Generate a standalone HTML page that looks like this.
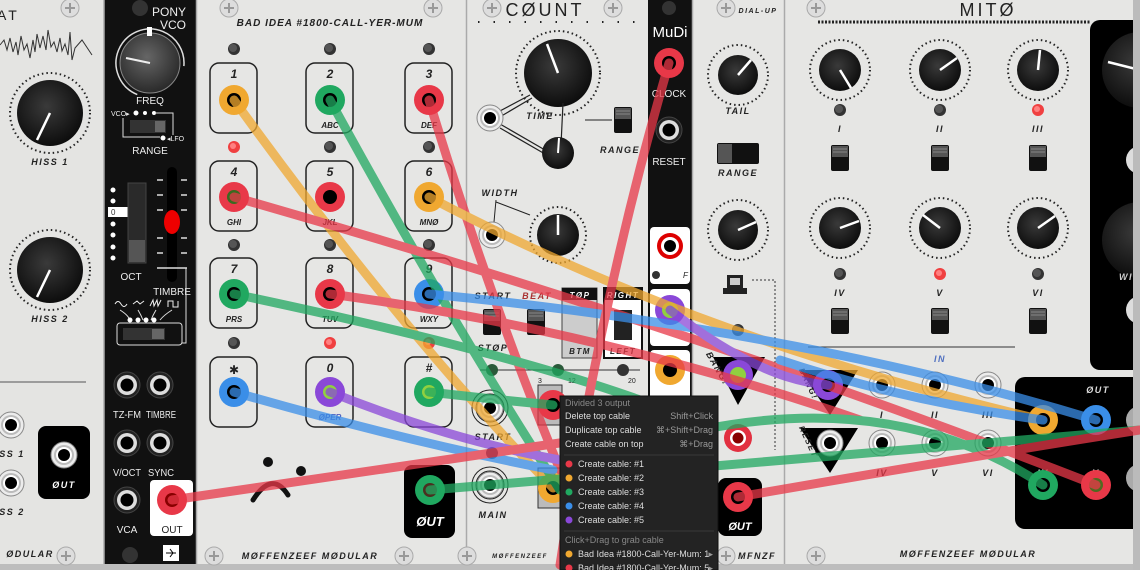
<!DOCTYPE html>
<html><head><meta charset="utf-8">
<style>
html,body{margin:0;padding:0;background:#d8d8d8;}
svg{display:block;}
text{font-family:"Liberation Sans","DejaVu Sans",sans-serif;}
.lbl{font-size:9px;font-weight:bold;font-style:italic;fill:#222;letter-spacing:1.5px;text-anchor:middle;}
.wl{font-size:10px;fill:#eee;text-anchor:middle;font-family:"Liberation Sans Narrow","Liberation Sans",sans-serif;}
.mi{font-size:9px;fill:#ddd;}
.mk{font-size:9px;fill:#999;text-anchor:end;}
.cab{fill:none;stroke-width:9;stroke-linecap:round;opacity:.75;}
</style></head><body>
<svg width="1140" height="570" viewBox="0 0 1140 570" xmlns="http://www.w3.org/2000/svg">
<defs>
<radialGradient id="kg" cx="45%" cy="40%" r="60%"><stop offset="0" stop-color="#3a3a3a"/><stop offset="1" stop-color="#0d0d0d"/></radialGradient>
<radialGradient id="kg2" cx="45%" cy="40%" r="60%"><stop offset="0" stop-color="#666"/><stop offset="1" stop-color="#2a2a2a"/></radialGradient>
<g id="jk"><circle r="13" fill="#ececec" stroke="#888" stroke-width="1"/><circle r="10" fill="#bbb"/><circle r="8" fill="#fff"/><circle r="6" fill="#000"/></g>
<g id="jkd"><circle r="13" fill="#222" stroke="#444"/><circle r="10" fill="#ddd"/><circle r="6.5" fill="#000"/></g>
<g id="sw"><rect x="-9" y="-13" width="18" height="26" rx="2" fill="#111"/><rect x="-8" y="-12" width="16" height="11" fill="#555"/><line x1="-7" y1="-9" x2="7" y2="-9" stroke="#888"/><line x1="-7" y1="-6" x2="7" y2="-6" stroke="#888"/></g>
<g id="led"><circle r="6" fill="#333"/><circle r="4" cx="-1" cy="-1" fill="#555"/></g>
<g id="ledr"><circle r="6" fill="#f04040"/><circle r="3" cx="-1" cy="-1" fill="#ff8080"/></g>
<g id="scr"><circle r="9" fill="#ddd" stroke="#aaa"/><path d="M-5 0H5M0 -5V5" stroke="#999" stroke-width="2"/></g>
</defs>

<rect x="0" y="0" width="104" height="570" fill="#e4e4e2"/>
<rect x="104" y="0" width="92" height="570" fill="#111"/>
<rect x="196" y="0" width="270" height="570" fill="#e6e6e4"/>
<rect x="466" y="0" width="182" height="570" fill="#e6e6e4"/>
<rect x="648" y="0" width="44" height="570" fill="#111"/>
<rect x="692" y="0" width="92" height="570" fill="#e6e6e4"/>
<rect x="784" y="0" width="356" height="570" fill="#e6e6e4"/>
<g stroke="#aaa" stroke-width="1.5"><line x1="104" y1="0" x2="104" y2="570"/><line x1="196.5" y1="0" x2="196.5" y2="570"/><line x1="466.5" y1="0" x2="466.5" y2="570"/><line x1="692.5" y1="0" x2="692.5" y2="570"/><line x1="784.5" y1="0" x2="784.5" y2="570"/></g>
<rect x="0" y="564" width="1140" height="6" fill="#bdbdbd"/>

<use href="#scr" x="70" y="8"/><use href="#scr" x="66" y="556"/>
<use href="#scr" x="229" y="8"/><use href="#scr" x="433" y="8"/><use href="#scr" x="214" y="556"/><use href="#scr" x="404" y="556"/>
<use href="#scr" x="492" y="8"/><use href="#scr" x="613" y="8"/><use href="#scr" x="467" y="556"/>
<use href="#scr" x="726" y="8"/><use href="#scr" x="726" y="556"/>
<use href="#scr" x="816" y="8"/><use href="#scr" x="816" y="556"/>
<circle cx="140" cy="8" r="8" fill="#333"/><circle cx="130" cy="555" r="8" fill="#333"/><circle cx="669" cy="8" r="7" fill="#333"/>

<!-- LEFT PANEL -->
<text x="-3" y="20" font-size="14" fill="#222" letter-spacing="3">AT</text>
<path d="M0 45 L4 40 7 50 10 38 13 52 16 42 18 55 21 36 24 50 27 44 30 58 33 40 35 52 37 34 40 48 43 36 46 50 48 30 51 47 54 42 57 52 60 38 62 51 65 44 68 55 70 32 72 60 75 48 82 40 92 55" stroke="#333" fill="none" stroke-width="1"/>
<circle cx="50" cy="113" r="40" fill="none" stroke="#222" stroke-width="2" stroke-dasharray="1.5 3"/>
<circle cx="50" cy="113" r="33" fill="url(#kg)"/><line x1="50" y1="113" x2="37" y2="140" stroke="#fff" stroke-width="2.5"/>
<text x="50" y="165" class="lbl">HISS 1</text>
<circle cx="50" cy="270" r="40" fill="none" stroke="#222" stroke-width="2" stroke-dasharray="1.5 3"/>
<circle cx="50" cy="270" r="33" fill="url(#kg)"/><line x1="50" y1="270" x2="37" y2="297" stroke="#fff" stroke-width="2.5"/>
<text x="50" y="322" class="lbl">HISS 2</text>
<line x1="0" y1="382" x2="86" y2="382" stroke="#555"/>
<use href="#jk" x="11" y="425"/><use href="#jk" x="11" y="483"/>
<text x="10" y="457" class="lbl">ISS 1</text><text x="10" y="515" class="lbl">ISS 2</text>
<rect x="38" y="426" width="52" height="73" rx="8" fill="#000"/>
<use href="#jk" x="64" y="455"/><text x="64" y="488" class="lbl" style="fill:#fff">ØUT</text>
<text x="30" y="557" class="lbl">ØDULAR</text>

<!-- PONY VCO -->
<text x="186" y="16" font-size="12" fill="#eee" text-anchor="end">PONY</text>
<text x="186" y="29" font-size="12" fill="#eee" text-anchor="end">VCO</text>
<circle cx="150" cy="63" r="34" fill="none" stroke="#ddd" stroke-width="1.5" stroke-dasharray="150 64" transform="rotate(112 150 63)"/>
<circle cx="150" cy="63" r="30" fill="url(#kg2)" stroke="#888"/>
<rect x="147" y="27" width="5" height="9" fill="#fff"/>
<line x1="150" y1="63" x2="126" y2="58" stroke="#eee" stroke-width="2"/>
<text x="150" y="104" class="wl">FREQ</text>
<text x="111" y="116" font-size="7" fill="#eee">VCO▸</text>
<circle cx="136" cy="113" r="2.5" fill="#fff"/><circle cx="145" cy="113" r="2" fill="#fff"/><circle cx="154" cy="113" r="2" fill="#fff"/><circle cx="163" cy="138" r="2.5" fill="#fff"/>
<text x="167" y="141" font-size="7" fill="#eee">◂LFO</text>
<path d="M123 118 V137 H160 M155 113 H173 V135" stroke="#ddd" fill="none"/>
<rect x="130" y="120" width="36" height="13" fill="#333"/><rect x="155" y="121" width="10" height="11" fill="#666"/>
<text x="150" y="154" class="wl">RANGE</text>
<g fill="#fff"><circle cx="113" cy="190" r="2.5"/><circle cx="113" cy="201" r="2.5"/><circle cx="113" cy="224" r="2.5"/><circle cx="113" cy="235" r="2.5"/><circle cx="113" cy="247" r="2.5"/><circle cx="113" cy="258" r="2.5"/></g>
<rect x="108" y="207" width="20" height="10" fill="#fff"/><text x="111" y="215" font-size="8" fill="#333">0</text>
<rect x="128" y="183" width="18" height="80" fill="#2a2a2a" stroke="#444"/><rect x="129" y="240" width="16" height="22" fill="#555"/>
<text x="131" y="280" class="wl">OCT</text>
<rect x="167" y="167" width="10" height="115" rx="5" fill="#000"/>
<g stroke="#ddd" stroke-width="1.5"><line x1="157" y1="180" x2="163" y2="180"/><line x1="181" y1="180" x2="187" y2="180"/><line x1="157" y1="195" x2="163" y2="195"/><line x1="181" y1="195" x2="187" y2="195"/><line x1="157" y1="210" x2="163" y2="210"/><line x1="181" y1="210" x2="187" y2="210"/><line x1="157" y1="238" x2="163" y2="238"/><line x1="181" y1="238" x2="187" y2="238"/><line x1="157" y1="253" x2="163" y2="253"/><line x1="181" y1="253" x2="187" y2="253"/><line x1="157" y1="268" x2="187" y2="268"/></g>
<ellipse cx="172" cy="222" rx="8" ry="12" fill="#e00"/>
<text x="172" y="295" class="wl">TIMBRE</text>
<path d="M115 304 q3 -5 6 0 t6 0 M133 304 l4 -3 3 3 4 -3 M150 306 l3 -6 1 6 3 -6 1 6 3 -6 M168 307 v-6 h5 v6 h5 v-6" stroke="#eee" fill="none"/>
<path d="M120 310 q8 5 10 10 M138 310 q3 5 5 10 M156 310 q-3 5 -5 10 M172 310 q-8 5 -12 10 M182 343 h4 v-75" stroke="#ddd" fill="none"/>
<g fill="#fff"><circle cx="130" cy="320" r="2.5"/><circle cx="138" cy="320" r="2.5"/><circle cx="146" cy="320" r="2.5"/><circle cx="154" cy="320" r="2.5"/></g>
<rect x="117" y="323" width="65" height="22" rx="3" fill="none" stroke="#ddd"/><rect x="123" y="328" width="42" height="12" fill="#333"/><rect x="152" y="329" width="12" height="10" fill="#666"/>
<use href="#jkd" x="127" y="385"/><use href="#jkd" x="160" y="385"/><use href="#jkd" x="127" y="443"/><use href="#jkd" x="160" y="443"/><use href="#jkd" x="127" y="500"/>
<text x="127" y="418" class="wl" textLength="28" lengthAdjust="spacingAndGlyphs">TZ-FM</text><text x="161" y="418" class="wl" textLength="30" lengthAdjust="spacingAndGlyphs">TIMBRE</text>
<text x="127" y="476" class="wl" textLength="28" lengthAdjust="spacingAndGlyphs">V/OCT</text><text x="161" y="476" class="wl" textLength="26" lengthAdjust="spacingAndGlyphs">SYNC</text>
<text x="127" y="533" class="wl">VCA</text>
<rect x="150" y="480" width="43" height="56" rx="4" fill="#fff"/>
<text x="172" y="533" class="wl" style="fill:#222">OUT</text>
<rect x="163" y="545" width="16" height="16" fill="#fff"/><path d="M166 553 h10 M170 549 l3 4 -3 4" stroke="#000" fill="none"/>

<!-- BAD IDEA -->
<text x="330" y="26" class="lbl" style="font-size:10px;letter-spacing:1px">BAD IDEA #1800-CALL-YER-MUM</text>
<g fill="none" stroke="#222" stroke-width="1.5">
<rect x="210" y="63" width="47" height="70" rx="9"/><rect x="306" y="63" width="47" height="70" rx="9"/><rect x="405" y="63" width="47" height="70" rx="9"/>
<rect x="210" y="161" width="47" height="70" rx="9"/><rect x="306" y="161" width="47" height="70" rx="9"/><rect x="405" y="161" width="47" height="70" rx="9"/>
<rect x="210" y="258" width="47" height="70" rx="9"/><rect x="306" y="258" width="47" height="70" rx="9"/><rect x="405" y="258" width="47" height="70" rx="9"/>
<rect x="210" y="357" width="47" height="70" rx="9"/><rect x="306" y="357" width="47" height="70" rx="9"/><rect x="405" y="357" width="47" height="70" rx="9"/>
</g>
<use href="#led" x="234" y="49"/><use href="#led" x="330" y="49"/><use href="#led" x="429" y="49"/>
<use href="#ledr" x="234" y="147"/><use href="#led" x="330" y="147"/><use href="#led" x="429" y="147"/>
<use href="#led" x="234" y="245"/><use href="#led" x="330" y="245"/><use href="#led" x="429" y="245"/>
<use href="#led" x="234" y="343"/><use href="#ledr" x="330" y="343"/><use href="#ledr" x="429" y="343"/>
<g class="lbl" style="font-size:12px;letter-spacing:0">
<text x="234" y="78">1</text><text x="330" y="78">2</text><text x="429" y="78">3</text>
<text x="234" y="176">4</text><text x="330" y="176">5</text><text x="429" y="176">6</text>
<text x="234" y="273">7</text><text x="330" y="273">8</text><text x="429" y="273">9</text>
<text x="234" y="374">✱</text><text x="330" y="372">0</text><text x="429" y="372">#</text></g>
<g class="lbl" style="font-size:8px;letter-spacing:0">
<text x="330" y="128">ABC</text><text x="429" y="128">DEF</text><text x="234" y="225">GHI</text><text x="330" y="225">JKL</text><text x="429" y="225">MNØ</text>
<text x="234" y="322">PRS</text><text x="330" y="322">TUV</text><text x="429" y="322">WXY</text><text x="330" y="420" style="fill:#5060c0">ØPER</text></g>
<circle cx="268" cy="462" r="5" fill="#111"/><circle cx="301" cy="471" r="5" fill="#111"/>
<path d="M253 500 Q272 470 288 495" stroke="#111" stroke-width="5" fill="none" stroke-linecap="round"/>
<rect x="404" y="465" width="51" height="73" rx="8" fill="#000"/>
<text x="430" y="526" font-size="13" font-weight="bold" font-style="italic" fill="#fff" text-anchor="middle">ØUT</text>
<text x="310" y="559" class="lbl">MØFFENZEEF MØDULAR</text>

<!-- COUNT -->
<text x="545" y="16" font-size="18" fill="#222" text-anchor="middle" letter-spacing="3">CØUNT</text>
<path d="M478 22 H640" stroke="#222" stroke-dasharray="1.5 14" stroke-width="2"/>
<circle cx="558" cy="73" r="42" fill="none" stroke="#222" stroke-width="2" stroke-dasharray="1.5 3"/>
<circle cx="558" cy="73" r="34" fill="url(#kg)"/><line x1="558" y1="73" x2="547" y2="44" stroke="#fff" stroke-width="2.5"/>
<path d="M498 112 L530 95 M498 118 L532 98 M500 124 L545 150 M500 128 L545 154 M563 103 L561 145" stroke="#222" stroke-width="1.2"/>
<use href="#jk" x="490" y="118"/>
<text x="540" y="119" class="lbl">TIME</text>
<circle cx="558" cy="153" r="16" fill="url(#kg)"/><line x1="558" y1="153" x2="559" y2="138" stroke="#fff" stroke-width="2"/>
<line x1="585" y1="120" x2="612" y2="120" stroke="#222"/>
<use href="#sw" x="623" y="120"/>
<text x="620" y="153" class="lbl">RANGE</text>
<text x="500" y="196" class="lbl">WIDTH</text>
<path d="M496 200 L494 222 M496 202 L530 215" stroke="#222"/>
<use href="#jk" x="492" y="235"/>
<circle cx="558" cy="235" r="28" fill="none" stroke="#222" stroke-width="2" stroke-dasharray="1.5 3"/>
<circle cx="558" cy="235" r="21" fill="url(#kg)"/><line x1="558" y1="235" x2="558" y2="215" stroke="#fff" stroke-width="2.5"/>
<text x="493" y="299" class="lbl">START</text><text x="537" y="299" class="lbl" style="fill:#a33">BEAT</text>
<use href="#sw" x="492" y="322"/><use href="#sw" x="536" y="322"/>
<text x="493" y="351" class="lbl">STØP</text>
<rect x="562" y="288" width="35" height="70" fill="#ccc" stroke="#444"/><rect x="562" y="288" width="35" height="12" fill="#111"/><text x="580" y="298" class="lbl" style="fill:#fff;font-size:8px">TØP</text><text x="580" y="354" class="lbl" style="font-size:8px">BTM</text>
<rect x="604" y="288" width="38" height="70" fill="#fff" stroke="#111" stroke-width="2"/><rect x="604" y="288" width="38" height="12" fill="#111"/><text x="623" y="298" class="lbl" style="fill:#fff;font-size:8px">RIGHT</text><text x="623" y="354" class="lbl" style="font-size:8px">LEFT</text>
<rect x="614" y="310" width="18" height="30" fill="#222"/>
<line x1="480" y1="370" x2="640" y2="370" stroke="#333"/>
<circle cx="492" cy="370" r="6" fill="#2a5a3a"/><circle cx="558" cy="370" r="6" fill="#2a5a3a"/><circle cx="623" cy="370" r="6" fill="#333"/>
<g fill="none" stroke="#222"><circle cx="490" cy="408" r="18"/><circle cx="490" cy="408" r="14"/></g><use href="#jk" x="490" y="408"/>
<text x="493" y="440" class="lbl">START</text>
<circle cx="492" cy="453" r="6" fill="#2a4a6a"/>
<g fill="none" stroke="#222"><circle cx="490" cy="485" r="18"/><circle cx="490" cy="485" r="14"/></g><use href="#jk" x="490" y="485"/>
<text x="493" y="518" class="lbl">MAIN</text>
<rect x="538" y="385" width="24" height="40" fill="#bbb" stroke="#333"/><rect x="538" y="468" width="24" height="40" fill="#bbb" stroke="#333"/>
<text x="538" y="383" font-size="7" fill="#222">3</text><text x="568" y="383" font-size="7" fill="#222">12</text><text x="628" y="383" font-size="7" fill="#222">20</text>
<text x="520" y="558" class="lbl" style="font-size:6px">MØFFENZEEF</text>

<!-- MuDi -->
<text x="670" y="37" font-size="15" fill="#fff" text-anchor="middle">MuDi</text>
<text x="669" y="97" class="wl">CLOCK</text>
<use href="#jkd" x="669" y="130"/>
<text x="669" y="165" class="wl">RESET</text>
<rect x="650" y="227" width="40" height="57" rx="4" fill="#fff"/><circle cx="670" cy="246" r="13" fill="#d00"/><circle cx="670" cy="246" r="9" fill="#fff"/><circle cx="670" cy="246" r="6" fill="#000"/>
<circle cx="656" cy="275" r="4" fill="#333"/><text x="683" y="278" font-size="8" font-style="italic" fill="#222">F</text>
<rect x="650" y="289" width="40" height="57" rx="4" fill="#fff"/>
<rect x="650" y="350" width="40" height="50" rx="4" fill="#fff"/>

<!-- DIAL-UP -->
<text x="758" y="13" class="lbl" style="font-size:7px">DIAL-UP</text>
<circle cx="738" cy="75" r="30" fill="none" stroke="#222" stroke-width="2" stroke-dasharray="1.5 3"/>
<circle cx="738" cy="75" r="20" fill="url(#kg)"/><line x1="738" y1="75" x2="751" y2="60" stroke="#fff" stroke-width="2.5"/>
<text x="738" y="114" class="lbl">TAIL</text>
<rect x="717" y="143" width="42" height="21" rx="2" fill="#111"/><rect x="718" y="144" width="14" height="19" fill="#555"/>
<text x="738" y="176" class="lbl">RANGE</text>
<circle cx="738" cy="230" r="30" fill="none" stroke="#222" stroke-width="2" stroke-dasharray="1.5 3"/>
<circle cx="738" cy="230" r="20" fill="url(#kg)"/><line x1="738" y1="230" x2="756" y2="222" stroke="#fff" stroke-width="2.5"/>
<rect x="727" y="275" width="16" height="13" fill="#222"/><rect x="730" y="278" width="10" height="7" fill="#ccc"/><rect x="723" y="288" width="24" height="6" fill="#222"/>
<path d="M752 280 H775 V450" stroke="#333" stroke-dasharray="2 2" fill="none"/>
<use href="#led" x="738" y="330"/>
<path d="M713 357 H765 L738 405 Z" fill="#000"/>
<text x="715" y="370" class="lbl" transform="rotate(60 715 370)">BANG!</text>
<circle cx="738" cy="438" r="14" fill="#e23040"/><circle cx="738" cy="438" r="8" fill="#fff"/><circle cx="738" cy="438" r="5.5" fill="#800"/>
<rect x="718" y="478" width="44" height="58" rx="8" fill="#000"/>
<text x="740" y="530" font-size="11" font-weight="bold" font-style="italic" fill="#fff" text-anchor="middle">ØUT</text>
<text x="757" y="559" class="lbl">MFNZF</text>

<!-- MITO -->
<text x="988" y="16" font-size="18" fill="#222" text-anchor="middle" letter-spacing="3">MITØ</text>
<path d="M818 22 H1090" stroke="#222" stroke-width="3" stroke-dasharray="2 1.5"/>
<g fill="none" stroke="#222" stroke-width="2" stroke-dasharray="1.5 3">
<circle cx="840" cy="70" r="30"/><circle cx="940" cy="70" r="30"/><circle cx="1038" cy="70" r="30"/>
<circle cx="840" cy="228" r="30"/><circle cx="940" cy="228" r="30"/><circle cx="1038" cy="228" r="30"/>
</g>
<circle cx="840" cy="70" r="21" fill="url(#kg)"/><circle cx="940" cy="70" r="21" fill="url(#kg)"/><circle cx="1038" cy="70" r="21" fill="url(#kg)"/>
<circle cx="840" cy="228" r="21" fill="url(#kg)"/><circle cx="940" cy="228" r="21" fill="url(#kg)"/><circle cx="1038" cy="228" r="21" fill="url(#kg)"/>
<g stroke="#fff" stroke-width="2.5"><line x1="840" y1="70" x2="851" y2="88"/><line x1="940" y1="70" x2="957" y2="58"/><line x1="1038" y1="70" x2="1040" y2="50"/><line x1="840" y1="228" x2="859" y2="221"/><line x1="940" y1="228" x2="923" y2="215"/><line x1="1038" y1="228" x2="1055" y2="216"/></g>
<use href="#led" x="840" y="110"/><use href="#led" x="940" y="110"/><use href="#ledr" x="1038" y="110"/>
<use href="#led" x="840" y="274"/><use href="#ledr" x="940" y="274"/><use href="#led" x="1038" y="274"/>
<text x="840" y="132" class="lbl">I</text><text x="940" y="132" class="lbl">II</text><text x="1038" y="132" class="lbl">III</text>
<text x="840" y="296" class="lbl">IV</text><text x="940" y="296" class="lbl">V</text><text x="1038" y="296" class="lbl">VI</text>
<use href="#sw" x="840" y="158"/><use href="#sw" x="940" y="158"/><use href="#sw" x="1038" y="158"/>
<use href="#sw" x="840" y="321"/><use href="#sw" x="940" y="321"/><use href="#sw" x="1038" y="321"/>
<rect x="1090" y="20" width="60" height="350" rx="10" fill="#000"/>
<circle cx="1140" cy="70" r="38" fill="url(#kg)"/><line x1="1140" y1="70" x2="1108" y2="62" stroke="#fff" stroke-width="2.5"/>
<circle cx="1140" cy="240" r="38" fill="url(#kg)"/>
<circle cx="1140" cy="160" r="14" fill="#ddd"/><circle cx="1140" cy="310" r="14" fill="#ddd"/>
<text x="1130" y="280" class="lbl" style="fill:#ccc">WID</text>
<line x1="808" y1="347" x2="1015" y2="347" stroke="#333"/>
<text x="940" y="362" class="lbl" style="fill:#5070c0">IN</text>
<path d="M800 370 H858 L830 415 Z" fill="#000"/>
<path d="M800 428 H858 L830 473 Z" fill="#000"/>
<text x="806" y="385" class="lbl" style="font-size:8px" transform="rotate(65 806 385)">BANG!</text>
<text x="806" y="443" class="lbl" style="font-size:8px" transform="rotate(65 806 443)">RESET</text>
<use href="#jk" x="882" y="385"/><use href="#jk" x="935" y="385"/><use href="#jk" x="988" y="385"/>
<use href="#jk" x="830" y="443"/><use href="#jk" x="882" y="443"/><use href="#jk" x="935" y="443"/><use href="#jk" x="988" y="443"/>
<text x="882" y="418" class="lbl">I</text><text x="935" y="418" class="lbl">II</text><text x="988" y="418" class="lbl">III</text>
<text x="882" y="476" class="lbl">IV</text><text x="935" y="476" class="lbl">V</text><text x="988" y="476" class="lbl">VI</text>
<rect x="1015" y="377" width="135" height="152" rx="10" fill="#000"/>
<text x="1098" y="393" class="lbl" style="fill:#ddd">ØUT</text>
<text x="1043" y="418" class="lbl" style="fill:#ddd">I</text><text x="1096" y="418" class="lbl" style="fill:#ddd">II</text>
<text x="1043" y="476" class="lbl" style="fill:#ddd">IV</text><text x="1096" y="476" class="lbl" style="fill:#ddd">V</text>
<circle cx="1140" cy="420" r="14" fill="#aaa"/><circle cx="1140" cy="478" r="14" fill="#aaa"/>
<text x="968" y="557" class="lbl">MØFFENZEEF MØDULAR</text>
<rect x="1133" y="0" width="7" height="570" fill="#bbb"/>

<!-- plug heads -->
<g>
<circle cx="234" cy="100" r="15" fill="#f0a830"/><circle cx="330" cy="100" r="15" fill="#20a860"/><circle cx="429" cy="100" r="15" fill="#e83848"/>
<circle cx="234" cy="197" r="15" fill="#e83848"/><circle cx="330" cy="197" r="15" fill="#e83848"/><circle cx="429" cy="197" r="15" fill="#f0a830"/>
<circle cx="234" cy="294" r="15" fill="#20a860"/><circle cx="330" cy="294" r="15" fill="#e83848"/><circle cx="429" cy="294" r="15" fill="#3a8ee8"/>
<circle cx="234" cy="392" r="15" fill="#3a8ee8"/><circle cx="330" cy="392" r="15" fill="#8a48d8"/><circle cx="429" cy="392" r="15" fill="#20a860"/>
<circle cx="430" cy="490" r="15" fill="#20a860"/><circle cx="172" cy="500" r="15" fill="#e83848"/>
<circle cx="669" cy="63" r="15" fill="#e83848"/><circle cx="670" cy="310" r="15" fill="#8a48d8"/><circle cx="670" cy="370" r="15" fill="#f0a830"/>
<circle cx="738" cy="375" r="15" fill="#8a48d8"/><circle cx="738" cy="497" r="15" fill="#e83848"/>
<circle cx="828" cy="385" r="15" fill="#8a48d8"/>
<circle cx="1043" cy="420" r="15" fill="#f0a830"/><circle cx="1096" cy="420" r="15" fill="#3a8ee8"/>
<circle cx="1043" cy="485" r="15" fill="#20a860"/><circle cx="1096" cy="485" r="15" fill="#e83848"/>
<circle cx="553" cy="405" r="15" fill="#e83848"/><circle cx="553" cy="488" r="15" fill="#f0a830"/>
</g>
<g fill="#000">
<circle cx="234" cy="100" r="7"/><circle cx="330" cy="100" r="7"/><circle cx="429" cy="100" r="7"/>
<circle cx="330" cy="197" r="7"/><circle cx="429" cy="197" r="7"/><circle cx="234" cy="294" r="7"/><circle cx="330" cy="294" r="7"/><circle cx="429" cy="294" r="7"/><circle cx="234" cy="392" r="7"/>
<circle cx="669" cy="63" r="7"/><circle cx="670" cy="370" r="7"/><circle cx="738" cy="497" r="7"/><circle cx="828" cy="385" r="7"/><circle cx="1043" cy="420" r="7"/><circle cx="1096" cy="420" r="7"/><circle cx="1043" cy="485" r="7"/><circle cx="553" cy="405" r="7"/><circle cx="553" cy="488" r="7"/>
</g>
<circle cx="234" cy="197" r="7" fill="#3a6a20"/><circle cx="330" cy="392" r="7" fill="#90d040"/><circle cx="429" cy="392" r="7" fill="#90d040"/><circle cx="430" cy="490" r="7" fill="#4a3020"/><circle cx="172" cy="500" r="7" fill="#800"/><circle cx="670" cy="310" r="8" fill="#90d040"/><circle cx="738" cy="375" r="8" fill="#90d040"/><circle cx="1096" cy="485" r="7" fill="#506a20"/>

<!-- cables -->
<g class="cab">
<path d="M234 100 Q400 330 553 488" stroke="#f0a830"/>
<path d="M330 100 Q450 320 560 490" stroke="#20a860"/>
<path d="M429 100 Q490 300 560 470" stroke="#e83848"/>
<path d="M234 197 Q700 330 1096 485" stroke="#e83848"/>
<path d="M429 197 Q700 340 1043 420" stroke="#f0a830"/>
<path d="M234 294 Q500 350 640 400" stroke="#20a860"/>
<path d="M330 294 Q600 330 860 420" stroke="#e83848"/>
<path d="M429 294 Q800 330 1096 420" stroke="#3a8ee8"/>
<path d="M234 392 Q400 440 553 470" stroke="#3a8ee8"/>
<path d="M330 392 Q450 440 560 460" stroke="#8a48d8"/>
<path d="M429 392 Q500 400 553 405" stroke="#20a860"/>
<path d="M172 500 Q380 470 580 440" stroke="#e83848"/>
<path d="M669 63 Q600 300 560 565" stroke="#e83848"/>
<path d="M430 490 Q800 460 1140 430" stroke="#20a860"/>
<path d="M670 310 Q760 380 828 385" stroke="#8a48d8"/>
<path d="M700 430 Q900 390 1043 485" stroke="#20a860"/>
<path d="M738 497 Q950 460 1140 430" stroke="#e83848"/>
<path d="M780 360 Q900 400 1043 420" stroke="#3a8ee8"/>
</g>

<!-- context menu -->
<rect x="560" y="396" width="158" height="174" fill="#232323" stroke="#111"/>
<text x="565" y="406" class="mi" style="fill:#888">Divided 3 output</text>
<text x="565" y="419" class="mi">Delete top cable</text><text x="713" y="419" class="mk">Shift+Click</text>
<text x="565" y="433" class="mi">Duplicate top cable</text><text x="713" y="433" class="mk">⌘+Shift+Drag</text>
<text x="565" y="447" class="mi">Create cable on top</text><text x="713" y="447" class="mk">⌘+Drag</text>
<line x1="564" y1="455" x2="714" y2="455" stroke="#3a3a3a"/>
<circle cx="569" cy="464" r="3.5" fill="#e83848"/><text x="578" y="467" class="mi">Create cable: #1</text>
<circle cx="569" cy="478" r="3.5" fill="#f0a830"/><text x="578" y="481" class="mi">Create cable: #2</text>
<circle cx="569" cy="492" r="3.5" fill="#20a860"/><text x="578" y="495" class="mi">Create cable: #3</text>
<circle cx="569" cy="506" r="3.5" fill="#3a8ee8"/><text x="578" y="509" class="mi">Create cable: #4</text>
<circle cx="569" cy="520" r="3.5" fill="#8a48d8"/><text x="578" y="523" class="mi">Create cable: #5</text>
<line x1="564" y1="531" x2="714" y2="531" stroke="#3a3a3a"/>
<text x="565" y="543" class="mi" style="fill:#888">Click+Drag to grab cable</text>
<circle cx="569" cy="554" r="3.5" fill="#f0a830"/><text x="578" y="557" class="mi">Bad Idea #1800-Call-Yer-Mum: 1</text><text x="713" y="557" class="mk">▸</text>
<circle cx="569" cy="568" r="3.5" fill="#e83848"/><text x="578" y="571" class="mi">Bad Idea #1800-Call-Yer-Mum: 5</text><text x="713" y="571" class="mk">▸</text>
</svg>
</body></html>
